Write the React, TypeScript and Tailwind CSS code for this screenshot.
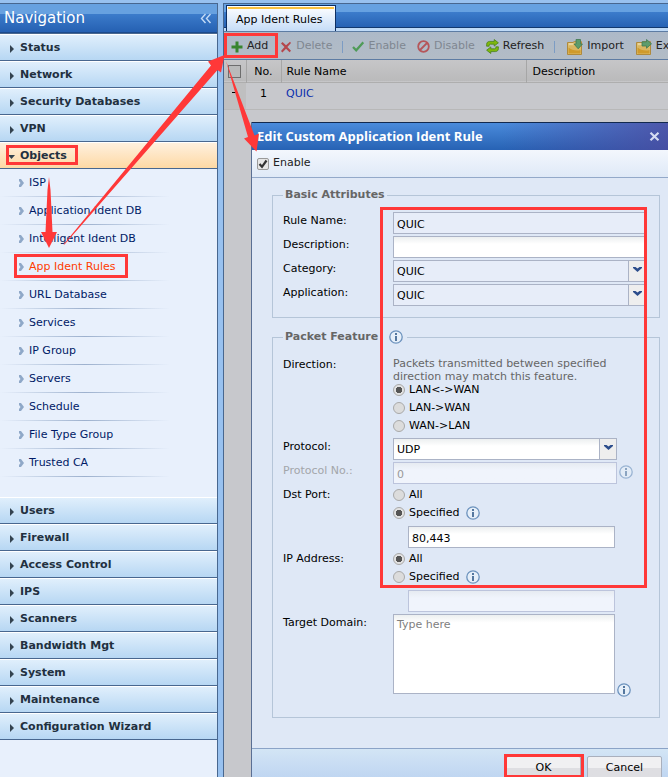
import React from 'react';

type IconProps = { className?: string };

const NAV_TOP = ['Status', 'Network', 'Security Databases', 'VPN'];
const NAV_BOTTOM = [
  'Users',
  'Firewall',
  'Access Control',
  'IPS',
  'Scanners',
  'Bandwidth Mgt',
  'System',
  'Maintenance',
  'Configuration Wizard',
];
const OBJECT_ITEMS = [
  'ISP',
  'Application Ident DB',
  'Intelligent Ident DB',
  'App Ident Rules',
  'URL Database',
  'Services',
  'IP Group',
  'Servers',
  'Schedule',
  'File Type Group',
  'Trusted CA',
];

const PlusIcon = () => (
  <svg className="h-3 w-3 shrink-0" viewBox="0 0 12 12">
    <path d="M4.5 .5h3v4h4v3h-4v4h-3v-4h-4v-3h4z" fill="#37852f" />
  </svg>
);

const CrossIcon = () => (
  <svg className="h-3 w-3 shrink-0" viewBox="0 0 12 12">
    <path d="M1 2.5 2.5 1 6 4.2 10 .8l1 1.2-3.6 4L11 9.8 9.6 11.2 6 7.8l-3.6 3.6L1 10l3.5-4z" fill="#b5474c" />
  </svg>
);

const CheckIcon = () => (
  <svg className="h-3 w-3 shrink-0" viewBox="0 0 12 12">
    <path d="m1 6 3.2 3.3L11.3 1.3" fill="none" stroke="#4f9b58" strokeWidth="2.2" />
  </svg>
);

const BanIcon = () => (
  <svg className="h-[13px] w-[13px] shrink-0" viewBox="0 0 13 13">
    <circle cx="6.5" cy="6.5" r="5.3" fill="none" stroke="#b5565a" strokeWidth="1.8" />
    <path d="m3 10 7-7" stroke="#b5565a" strokeWidth="1.8" />
  </svg>
);

const RefreshIcon = () => (
  <svg className="h-[15px] w-[13px] shrink-0" viewBox="0 0 13 15">
    <g fill="#7fb80d" stroke="#3e7a12" strokeWidth=".7" strokeLinejoin="round">
      <path d="M.6 7.2V5.4C.6 3.6 1.8 2.4 3.6 2.4h4.6V.5l4.2 3.3-4.2 3.3V5.2H4.4c-.8 0-1.2.4-1.2 1.1v.9z" />
      <path d="M12.4 7.8v1.8c0 1.8-1.2 3-3 3H4.8v1.9L.6 11.2l4.2-3.3v1.9h3.8c.8 0 1.2-.4 1.2-1.1v-.9z" />
    </g>
  </svg>
);

const FolderIcon = ({ direction }: { direction: 'down' | 'right' }) => (
  <svg className="h-4 w-4 shrink-0" viewBox="0 0 16 16">
    <path d="M.5 3.5H6l1-.8h7.500v12.800H.5z" fill="#e0c273" stroke="#b08a3c" />
    <path d="M1.500 6.500h12v8h-12z" fill="#d9b661" />
    <path d="M1.500 14.500v-6c3 2.500 8 4 12 2.500v3.500z" fill="#cf9a2b" />
    <path d="M2 4.500h4v1H2z" fill="#f0e6c0" />
    {direction === 'down' ? (
      <path d="M9 .5h4.500v4.500h2L11.200 9.800 7 5h2z" fill="#5d9c6c" stroke="#417a50" strokeWidth=".8" />
    ) : (
      <path d="M6 2.800h4.500V.5l5 4.300-5 4.400V7H6z" fill="#5d9c6c" stroke="#417a50" strokeWidth=".8" />
    )}
  </svg>
);

const InfoIcon = ({ className = '' }: IconProps) => (
  <svg className={`h-3.5 w-3.5 shrink-0 ${className}`} viewBox="0 0 14 14">
    <circle cx="7" cy="7" r="6.200" fill="#e6eff9" stroke="#6c92bd" strokeWidth="1.300" />
    <path d="M6 3h2v2H6zM6 6h2v5H6z" fill="#54779f" />
  </svg>
);

const Chevron = () => (
  <svg className="h-[5px] w-[9px]" viewBox="0 0 9 5">
    <path d="M0 0h2.500l2 1.500L6.500 0H9v1L4.500 5 0 1z" fill="#2c4d8c" />
  </svg>
);

const NavGroup = ({ label, open = false }: { label: string; open?: boolean }) => (
  <button
    type="button"
    aria-expanded={open}
    className={`flex h-[27px] w-full items-center border-t border-b border-t-white border-b-[#48678f] bg-linear-to-b pt-0.5 pl-2 text-left text-[11px] font-bold text-[#22303f] ${
      open ? 'from-[#fef0de] to-[#fed9a4]' : 'from-[#e0effc] to-[#b7d7f3]'
    }`}
  >
    <span className="flex w-3 items-center">
      {open ? (
        <svg className="h-1 w-[7px]" viewBox="0 0 7 4">
          <path d="M0 0h7L3.500 4z" fill="#33424f" />
        </svg>
      ) : (
        <svg className="ml-0.5 h-2 w-1" viewBox="0 0 4 8">
          <path d="M0 0v8l4-4z" fill="#33424f" />
        </svg>
      )}
    </span>
    {label}
  </button>
);

const Sidebar: React.FC = () => (
  <nav className="w-[218px] shrink-0 border-t border-r border-[#48678f] bg-[#e8f0fc]">
    <div className="flex h-[29px] items-center justify-between border-b border-[#1c4a8c] bg-linear-to-b from-[#67a1e0] from-35% via-[#3c7ccb] via-35% to-[#2560b2] pr-[5px] pl-1 text-white">
      <h1 className="text-[15px]">Navigation</h1>
      <button type="button" aria-label="Collapse navigation">
        <svg className="h-[11px] w-3" viewBox="0 0 12 11">
          <path d="M5.500 1 1.500 5.500l4 4.500M10.500 1l-4 4.500 4 4.500" fill="none" stroke="#c3dbf6" strokeWidth="1.400" />
        </svg>
      </button>
    </div>
    <div className="border-t border-[#48678f]">
      {NAV_TOP.map((label) => (
        <NavGroup key={label} label={label} />
      ))}
    </div>
    <NavGroup label="Objects" open />
    <ul className="pb-5">
      {OBJECT_ITEMS.map((item) => (
        <li key={item}>
          <a
            href="#"
            className={`flex h-7 items-center pl-[19px] text-[11px] ${item === 'App Ident Rules' ? 'text-[#ff3c00]' : 'text-[#001a66]'}`}
          >
            <svg className="mr-[5px] h-2 w-[5px]" viewBox="0 0 5 8">
              <path d="M0 0h2l3 4-3 4H0V6l1.500-2L0 2z" fill="#8fa8c8" />
            </svg>
            {item}
          </a>
          <div className="-mt-px h-px w-[170px] bg-linear-to-r from-transparent via-[#9db1ce] to-transparent" />
        </li>
      ))}
    </ul>
    {NAV_BOTTOM.map((label) => (
      <NavGroup key={label} label={label} />
    ))}
  </nav>
);

const ToolButton = ({ icon, label, disabled = false }: { icon: React.ReactNode; label: string; disabled?: boolean }) => (
  <button type="button" disabled={disabled} className={`flex shrink-0 items-center gap-1 ${disabled ? 'text-[#7f8791]' : 'text-[#222]'}`}>
    {icon}
    {label}
  </button>
);

const Toolbar: React.FC = () => (
  <div className="flex h-[29px] items-center overflow-hidden border-t border-b border-[#5d7ca3] bg-linear-to-b from-[#adb9c8] to-[#b2bcc6] pt-0.5 pl-[7px] whitespace-nowrap">
    <div className="flex items-center gap-3">
      <ToolButton icon={<PlusIcon />} label="Add" />
      <ToolButton icon={<CrossIcon />} label="Delete" disabled />
    </div>
    <span className="mr-[9px] ml-2.5 h-3 w-px shrink-0 bg-[#7c9cc4]" />
    <div className="flex items-center gap-[11px]">
      <ToolButton icon={<CheckIcon />} label="Enable" disabled />
      <ToolButton icon={<BanIcon />} label="Disable" disabled />
      <ToolButton icon={<RefreshIcon />} label="Refresh" />
    </div>
    <span className="mr-3 ml-2.5 h-3 w-px shrink-0 bg-[#7c9cc4]" />
    <div className="flex items-center gap-3">
      <ToolButton icon={<FolderIcon direction="down" />} label="Import" />
      <ToolButton icon={<FolderIcon direction="right" />} label="Ex" />
    </div>
  </div>
);

const RulesTable: React.FC = () => (
  <table className="w-full table-fixed border-collapse text-left">
    <thead>
      <tr className="h-[22px] border-b border-[#aeaeae] bg-linear-to-b from-[#c6c6c8] to-[#bababb]">
        <th className="w-[22px] border-r border-[#a6a6a6] pt-0.5 pl-1">
          <input
            type="checkbox"
            aria-label="Select all rules"
            className="block h-[13px] w-[13px] appearance-none border border-[#6d6d6d] bg-[#b9baba]"
          />
        </th>
        <th className="w-[35px] border-r border-[#a6a6a6] pt-0.5 text-center font-normal">No.</th>
        <th className="w-[245px] border-r border-[#a6a6a6] pt-0.5 pl-[5px] font-normal">Rule Name</th>
        <th className="pt-0.5 pl-1.5 font-normal">Description</th>
      </tr>
    </thead>
    <tbody>
      <tr className="h-[27px] border-b border-[#b8b8b8]">
        <td className="bg-[#bfbfc0] pl-2">
          <div className="mb-1.5 h-px w-1.5 bg-black" />
        </td>
        <td className="pb-0.5 text-center">1</td>
        <td className="pb-0.5 pl-[5px]">
          <a href="#" className="text-[#0a2fae]">QUIC</a>
        </td>
        <td />
      </tr>
    </tbody>
  </table>
);

const inputStyle =
  'h-[22px] border border-[#abb3c6] bg-white bg-linear-to-b from-[#eceff0] to-white to-35% px-[3px] pt-0.5 text-[11px] text-black outline-none disabled:border-[#bcc4dc] disabled:from-[#e6ebf1] disabled:to-[#f0f4fc] disabled:text-[#999]';
const readonlyStyle = 'h-[22px] border border-[#abb3c6] bg-[#e7edf9] px-[3px] pt-0.5 text-[11px] text-black outline-none';

const Row = ({ label, htmlFor, muted = false, children }: { label: string; htmlFor?: string; muted?: boolean; children: React.ReactNode }) => (
  <div className="flex items-start">
    {htmlFor ? (
      <label htmlFor={htmlFor} className={`w-[110px] shrink-0 leading-[18px] ${muted ? 'text-[#a3a6aa]' : ''}`}>
        {label}
      </label>
    ) : (
      <span className="w-[110px] shrink-0 leading-[18px]">{label}</span>
    )}
    {children}
  </div>
);

const Dropdown = ({ id, value, readOnly = false, className }: { id: string; value: string; readOnly?: boolean; className: string }) => (
  <div className={`relative ${className}`}>
    <select id={id} className={`block w-full appearance-none ${readOnly ? readonlyStyle : inputStyle}`}>
      <option>{value}</option>
    </select>
    <span className="pointer-events-none absolute inset-y-px right-px flex w-[17px] justify-center border-l border-[#abb3c6] bg-[#eeeeee] pt-1.5">
      <Chevron />
    </span>
  </div>
);

const Radio = ({ name, label, checked = false, info = false }: { name: string; label: string; checked?: boolean; info?: boolean }) => (
  <div className="flex h-[18px] items-center">
    <label className="flex items-center gap-1">
      <input
        type="radio"
        name={name}
        defaultChecked={checked}
        className="h-3 w-3 appearance-none rounded-full border border-[#a9a9a9] bg-[#dcdcdc] checked:bg-[radial-gradient(circle,#555_0_3px,#e2e2e2_3px)]"
      />
      {label}
    </label>
    {info && <InfoIcon className="ml-1.5" />}
  </div>
);

const RuleDialog: React.FC = () => (
  <div role="dialog" aria-label="Edit Custom Application Ident Rule" className="absolute top-[118px] right-0 left-[27px] border-l border-[#5a6f94] bg-[#dfe8f6]">
    <div className="flex h-7 items-center justify-between border-t border-[#12294e] bg-linear-to-b from-[#4a8bdb] to-[#2762b4] text-white">
      <div className="flex h-full flex-1 items-center justify-between bg-linear-to-r from-transparent from-60% to-[#4d4a9f]/80 pr-2 pl-[5px]">
        <h2 className="font-['Open_Sans','Noto_Sans',sans-serif] text-[13px] font-bold">Edit Custom Application Ident Rule</h2>
        <button type="button" aria-label="Close">
          <svg className="h-[9px] w-[11px]" viewBox="0 0 11 9">
            <path d="m1.500.8 8 7.400m0-7.400-8 7.400" stroke="#d5dcf2" strokeWidth="2.200" />
          </svg>
        </button>
      </div>
    </div>
    <div className="flex h-7 items-center border-b border-[#93a9c9] bg-linear-to-b from-[#f3f7fd] to-[#dfe9f7] pl-[5px]">
      <label className="flex items-center gap-1 text-[#222]">
        <span className="relative">
          <input type="checkbox" defaultChecked className="block h-3 w-3 appearance-none rounded-xs border border-[#9a9a9a] bg-[#e6e6e6]" />
          <svg className="pointer-events-none absolute top-0 left-0 h-3 w-3" viewBox="0 0 12 12">
            <path d="M2.500 6 5 8.800l4.500-6.300" fill="none" stroke="#333" strokeWidth="2.200" />
          </svg>
        </span>
        Enable
      </label>
    </div>

    <form className="flex flex-col gap-[11px] pt-[9px] pr-2 pb-[30px] pl-5">
      <fieldset className="border border-[#b5c5d8] pt-[9px] pr-[13px] pb-[11px] pl-2.5">
        <legend className="h-4 px-0.5 leading-4 font-bold text-[#666]">Basic Attributes</legend>
        <div className="flex flex-col gap-0.5">
          <Row label="Rule Name:" htmlFor="rule-name">
            <input id="rule-name" readOnly defaultValue="QUIC" className={`min-w-0 flex-1 ${readonlyStyle}`} />
          </Row>
          <Row label="Description:" htmlFor="description">
            <input id="description" className={`min-w-0 flex-1 ${inputStyle}`} />
          </Row>
          <Row label="Category:" htmlFor="category">
            <Dropdown id="category" value="QUIC" readOnly className="flex-1" />
          </Row>
          <Row label="Application:" htmlFor="application">
            <Dropdown id="application" value="QUIC" readOnly className="flex-1" />
          </Row>
        </div>
      </fieldset>

      <fieldset className="border border-[#b5c5d8] pt-[11px] pr-[13px] pb-[23px] pl-2.5">
        <legend className="flex h-4 items-center gap-[11px] pr-1 pl-0.5 font-bold text-[#666]">
          Packet Feature
          <InfoIcon />
        </legend>
        <div className="flex flex-col gap-0.5">
          <Row label="Direction:">
            <div className="pb-px">
              <p className="h-[25px] w-[232px] pt-px leading-[13px] text-[#666]">
                Packets transmitted between specified direction may match this feature.
              </p>
              <Radio name="direction" label="LAN<->WAN" checked />
              <Radio name="direction" label="LAN->WAN" />
              <Radio name="direction" label="WAN->LAN" />
            </div>
          </Row>
          <Row label="Protocol:" htmlFor="protocol">
            <Dropdown id="protocol" value="UDP" className="w-56" />
          </Row>
          <Row label="Protocol No.:" htmlFor="protocol-no" muted>
            <input id="protocol-no" disabled defaultValue="0" className={`w-56 ${inputStyle}`} />
            <InfoIcon className="mt-[3px] ml-0.5 opacity-60" />
          </Row>
          <Row label="Dst Port:">
            <div>
              <Radio name="port" label="All" />
              <Radio name="port" label="Specified" checked info />
              <input aria-label="Dst port" defaultValue="80,443" className={`mt-1 ml-[15px] block w-[207px] ${inputStyle}`} />
            </div>
          </Row>
          <Row label="IP Address:">
            <div>
              <Radio name="ip" label="All" checked />
              <Radio name="ip" label="Specified" info />
              <input aria-label="IP address" disabled className={`mt-1 ml-[15px] block w-[207px] ${inputStyle}`} />
            </div>
          </Row>
          <Row label="Target Domain:" htmlFor="target-domain">
            <textarea
              id="target-domain"
              placeholder="Type here"
              className="h-20 w-[222px] resize-none border border-[#abb3c6] bg-white bg-linear-to-b from-[#eceff0] to-white to-10% px-[3px] py-0.5 text-[11px] leading-4 outline-none placeholder:text-[#808080]"
            />
            <InfoIcon className="-mb-[3px] ml-0.5 self-end" />
          </Row>
        </div>
      </fieldset>
    </form>

    <div className="flex justify-end gap-1.5 border-t border-[#8ba3c7] bg-linear-to-b from-[#d3e5f5] to-[#b8d0f0] pt-[7px] pr-1.5 pb-2">
      <button type="button" className="h-6 w-[75px] rounded-xs border border-[#a9b0bd] bg-linear-to-b from-[#f0f0f2] from-50% to-[#dedee2] to-50%">OK</button>
      <button type="button" className="h-6 w-[75px] rounded-xs border border-[#a9b0bd] bg-linear-to-b from-[#f0f0f2] from-50% to-[#dedee2] to-50%">Cancel</button>
    </div>
  </div>
);

// Step markers drawn over the whole screen.
const Annotations: React.FC = () => (
  <svg className="pointer-events-none absolute top-0 left-0 h-[777px] w-[668px]" viewBox="0 0 668 777">
    <g fill="none" stroke="#ff3838" strokeWidth="3">
      <rect x="7.500" y="146.500" width="69" height="17" />
      <rect x="15.500" y="255.500" width="111" height="21" />
      <rect x="225.500" y="34.500" width="51" height="22" />
      <rect x="381.500" y="208.500" width="264" height="378" />
      <rect x="505.500" y="755.500" width="77" height="21" />
    </g>
    <g fill="#ff3838">
      <path d="M49 177 50.500 190 52.500 232H57L49 248 41 232h4.500L47.500 190z" />
      <path d="M63.500 244.500 211 65.500 208 61.500 224.500 55 221 72.500 217.500 70 64.500 244.500z" />
      <path d="M226 61 254.500 135.500 259 133.500 256.500 151.500 244 138.500 248 137z" />
    </g>
  </svg>
);

const App: React.FC = () => (
  <div className="relative flex h-screen gap-[5px] overflow-hidden bg-[#98c1ef] pt-[3px] font-['DejaVu_Sans',Verdana,sans-serif] text-[11px] text-black">
    <Sidebar />
    <main className="relative min-w-0 flex-1 border-t border-l border-[#48678f] bg-[#c7c8cc]">
      <div className="border-b-[3px] border-[#bfdaf7]">
        <div className="flex h-6 items-end border-b border-[#12396f] bg-linear-to-b from-[#66a1e1] from-35% via-[#3c7ccb] via-35% to-[#2762b4] pl-0.5">
          <button
            type="button"
            className="-mb-1 h-[26px] shrink-0 border border-b-0 border-[#0e2f62] bg-linear-to-b from-white to-[#c5dcf7] p-px pb-0"
          >
            <span className="flex h-full items-center border-t-2 border-[#fcc23f] pr-3 pl-2">App Ident Rules</span>
          </button>
        </div>
      </div>
      <Toolbar />
      <RulesTable />
      <RuleDialog />
    </main>
    <Annotations />
  </div>
);

export default App;
